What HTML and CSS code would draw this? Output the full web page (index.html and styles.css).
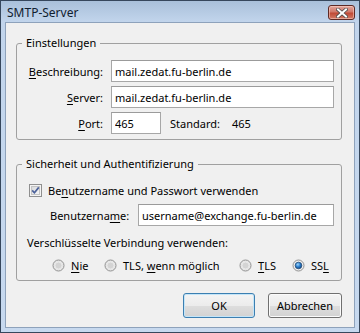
FILE: index.html
```html
<!DOCTYPE html>
<html lang="de">
<head>
    <meta charset="UTF-8">
    <title>SMTP-Server</title>
    <link rel="stylesheet" href="styles.css">
</head>
<body>
    <div class="window">
        <div class="titlebar">
            <span class="title">SMTP-Server</span>
            <button class="close-btn">
                <svg width="12" height="10" viewBox="0 0 12 10">
                    <path d="M2 1.5 L10 8.5 M10 1.5 L2 8.5" stroke="#4a4a4a" stroke-width="3.6" stroke-linecap="square"/>
                    <path d="M2 1.5 L10 8.5 M10 1.5 L2 8.5" stroke="#ffffff" stroke-width="2" stroke-linecap="square"/>
                </svg>
            </button>
        </div>
        <div class="client">
            <fieldset class="group">
                <legend>Einstellungen</legend>
                <div class="form-grid">
                    <label class="field-label"><u>B</u>eschreibung:</label>
                    <input class="text-field" type="text" value="mail.zedat.fu-berlin.de">
                    <label class="field-label"><u>S</u>erver:</label>
                    <input class="text-field" type="text" value="mail.zedat.fu-berlin.de">
                    <label class="field-label"><u>P</u>ort:</label>
                    <div class="port-row">
                        <input class="text-field port-field" type="text" value="465">
                        <span class="std-label">Standard:</span>
                        <span>465</span>
                    </div>
                </div>
            </fieldset>

            <fieldset class="group">
                <legend>Sicherheit und Authentifizierung</legend>
                <div class="check-row">
                    <svg class="checkbox" width="13" height="13" viewBox="0 0 13 13">
                        <defs>
                            <linearGradient id="cbFill" x1="0" y1="0" x2="1" y2="1">
                                <stop offset="0" stop-color="#d9dadc"/>
                                <stop offset="1" stop-color="#f6f6f6"/>
                            </linearGradient>
                        </defs>
                        <rect x="0.5" y="0.5" width="12" height="12" fill="#f4f4f4" stroke="#8f8f8f"/>
                        <rect x="2.5" y="2.5" width="8" height="8" fill="url(#cbFill)" stroke="#c4c4c4"/>
                        <path d="M3.2 6.4 L5.4 8.8 L9.8 3.4" fill="none" stroke="#4c619a" stroke-width="1.7"/>
                    </svg>
                    <span>Be<u>n</u>utzername und Passwort verwenden</span>
                </div>
                <div class="user-row">
                    <label class="user-label">Benutzerna<u>m</u>e:</label>
                    <input class="text-field" type="text" value="username@exchange.fu-berlin.de">
                </div>
                <div class="hint">Verschlüsselte Verbindung verwenden:</div>
                <div class="radio-row">
                    <div class="radio-item">
                        <svg width="13" height="13" viewBox="0 0 13 13"><circle cx="6.5" cy="6.5" r="5.5" fill="#e6e6e6" stroke="#929292"/><circle cx="6.5" cy="6.5" r="3.5" fill="#d4d4d4" stroke="#e9e9e9"/></svg>
                        <span><u>N</u>ie</span>
                    </div>
                    <div class="radio-item">
                        <svg width="13" height="13" viewBox="0 0 13 13"><circle cx="6.5" cy="6.5" r="5.5" fill="#e6e6e6" stroke="#929292"/><circle cx="6.5" cy="6.5" r="3.5" fill="#d4d4d4" stroke="#e9e9e9"/></svg>
                        <span>TLS, <u>w</u>enn möglich</span>
                    </div>
                    <div class="radio-item">
                        <svg width="13" height="13" viewBox="0 0 13 13"><circle cx="6.5" cy="6.5" r="5.5" fill="#e6e6e6" stroke="#929292"/><circle cx="6.5" cy="6.5" r="3.5" fill="#d4d4d4" stroke="#e9e9e9"/></svg>
                        <span><u>T</u>LS</span>
                    </div>
                    <div class="radio-item">
                        <svg width="13" height="13" viewBox="0 0 13 13">
                            <defs>
                                <radialGradient id="dot" cx="0.4" cy="0.35" r="0.7">
                                    <stop offset="0" stop-color="#9fd6fb"/>
                                    <stop offset="0.5" stop-color="#2b7fcf"/>
                                    <stop offset="1" stop-color="#0f3f7a"/>
                                </radialGradient>
                            </defs>
                            <circle cx="6.5" cy="6.5" r="5.5" fill="#ececec" stroke="#929292"/>
                            <circle cx="6.5" cy="6.5" r="3.3" fill="url(#dot)" stroke="#2a4f77" stroke-width="0.8"/>
                        </svg>
                        <span>SS<u>L</u></span>
                    </div>
                </div>
            </fieldset>

            <div class="dialog-buttons">
                <button class="btn btn-default">OK</button>
                <button class="btn">Abbrechen</button>
            </div>
        </div>
    </div>
</body>
</html>
```

FILE: styles.css
```css
* {
    box-sizing: border-box;
    margin: 0;
    padding: 0;
}
body {
    font-family: "Noto Sans", "Open Sans", sans-serif;
    font-size: 11px;
    color: #000;
    background: #c8daf0;
}
u {
    text-decoration-thickness: 1px;
    text-underline-offset: 2px;
}
.window {
    width: 360px;
    height: 333px;
    border: 1px solid #36475c;
    padding: 0 4px 4px;
    display: flex;
    flex-direction: column;
    background: linear-gradient(to bottom, #a9c0da 0, #c2d5ec 21px, #c7d9ef 100%);
}
.titlebar {
    height: 21px;
    display: flex;
    justify-content: space-between;
    align-items: flex-start;
    padding-left: 2px;
}
.title {
    font-size: 12px;
    line-height: 16px;
    margin-top: 4px;
    color: #10202f;
}
.close-btn {
    width: 27px;
    height: 15px;
    margin-top: 4px;
    border: 1px solid #5e2a25;
    border-radius: 3px;
    background: linear-gradient(to bottom, #e3a79d 0, #d0786a 45%, #c04a36 55%, #d27a66 100%);
    box-shadow: inset 0 0 0 1px rgba(255, 220, 210, 0.5);
    display: flex;
    justify-content: center;
    align-items: center;
}
.client {
    flex: 1;
    border: 1px solid #8ea2bb;
    background-color: #f0f0f0;
    display: flex;
    flex-direction: column;
}
.group {
    border: 1px solid #a0a0a0;
    border-radius: 3px;
    margin: 12px 12px 0 10px;
    padding: 0;
    min-width: 0;
}
.group + .group {
    margin-top: 16px;
}
.group legend {
    margin-left: 5px;
    padding: 0 4px;
    line-height: 16px;
    font-size: 11px;
}
.form-grid {
    display: grid;
    grid-template-columns: 86px 1fr;
    column-gap: 8px;
    row-gap: 4px;
    padding: 9px 7px 5px 0;
    align-items: center;
}
.field-label {
    text-align: right;
}
.text-field {
    height: 22px;
    width: 100%;
    border: 1px solid #a7a7a7;
    border-top-color: #9b9b9b;
    background-color: #fff;
    padding: 0 3px;
    font-family: inherit;
    font-size: 11px;
    color: #000;
    outline: none;
}
.port-row {
    display: flex;
    align-items: center;
}
.port-field {
    width: 50px;
    flex: none;
}
.std-label {
    width: 62px;
    margin-left: 9px;
}
.check-row {
    display: flex;
    align-items: center;
    height: 16px;
    margin-top: 10px;
    padding-left: 12px;
}
.checkbox {
    margin-right: 6px;
    flex: none;
}
.user-row {
    display: flex;
    align-items: center;
    margin: 6px 7px 0 33px;
}
.user-label {
    width: 88px;
    flex: none;
}
.hint {
    line-height: 16px;
    margin-top: 9px;
    padding-left: 10px;
}
.radio-row {
    display: grid;
    grid-template-columns: 52px 135px 53px auto;
    height: 16px;
    margin: 6px 0 7px 35px;
}
.radio-item {
    display: flex;
    align-items: center;
}
.radio-item svg {
    margin-right: 6px;
    flex: none;
}
.dialog-buttons {
    display: flex;
    justify-content: flex-end;
    gap: 13px;
    margin: 12px 12px 0 0;
}
.btn {
    height: 25px;
    width: 74px;
    border: 1px solid #707070;
    border-radius: 3px;
    background: linear-gradient(to bottom, #f4f4f4 0, #ececec 50%, #dedede 50%, #d2d2d2 100%);
    box-shadow: inset 0 0 0 1px #fbfbfb;
    font-family: inherit;
    font-size: 11px;
    color: #000;
}
.btn-default {
    width: 72px;
    border-color: #3c7fb1;
    box-shadow: inset 0 0 0 1px #c4e5f8;
}
```
